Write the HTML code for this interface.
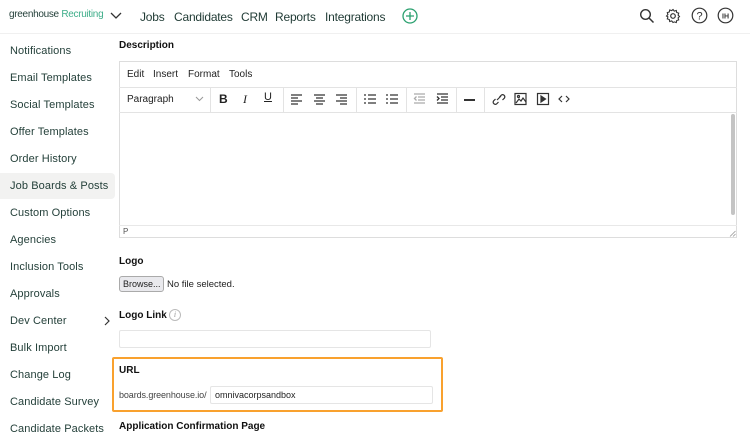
<!DOCTYPE html>
<html><head><meta charset="utf-8"><style>
*{margin:0;padding:0;box-sizing:border-box}
body{width:750px;height:439px;overflow:hidden;background:#fff;font-family:"Liberation Sans",sans-serif;color:#222;position:relative}
.a{position:absolute;white-space:nowrap}
.nav{font-size:12px;color:#1f3a34;top:10px;letter-spacing:-0.2px}
.side{left:10px;font-size:11px;color:#24403a;letter-spacing:0.1px}
.lbl{font-size:10px;font-weight:bold;color:#111}
.tb{font-size:10px;color:#222}
.sep{position:absolute;top:87px;width:1px;height:25px;background:#e3e3e3}
svg{position:absolute}
</style></head><body>
<!-- top nav -->
<div class="a" style="left:9px;top:9px;font-size:10px;color:#24403a;letter-spacing:-0.3px">greenhouse <span style="color:#3fae8a">Recruiting</span></div>
<svg style="left:110px;top:11px" width="12" height="9" viewBox="0 0 12 9"><path d="M1 2l5 5 5-5" fill="none" stroke="#333" stroke-width="1.3"/></svg>
<div class="a nav" style="left:140px">Jobs</div>
<div class="a nav" style="left:174px">Candidates</div>
<div class="a nav" style="left:241px">CRM</div>
<div class="a nav" style="left:275px">Reports</div>
<div class="a nav" style="left:325px">Integrations</div>
<svg style="left:402px;top:8px" width="16" height="16" viewBox="0 0 16 16"><circle cx="8" cy="8" r="7" fill="none" stroke="#2aa06f" stroke-width="1.3"/><path d="M8 4v8M4 8h8" stroke="#2aa06f" stroke-width="1.3"/></svg>
<svg style="left:639px;top:8px" width="16" height="16" viewBox="0 0 16 16"><circle cx="6.5" cy="6.5" r="4.8" fill="none" stroke="#333" stroke-width="1.4"/><path d="M10 10l4.5 4.5" stroke="#333" stroke-width="1.5"/></svg>
<svg style="left:665px;top:8px" width="16" height="16" viewBox="0 0 16 16"><circle cx="8" cy="8" r="2.3" fill="none" stroke="#333" stroke-width="1.2"/><path d="M8 1.5l1.3 1.6 2-.6.4 2 2 .6-.6 2 1.4 1.4-1.4 1.4.6 2-2 .6-.4 2-2-.6L8 14.5l-1.3-1.6-2 .6-.4-2-2-.6.6-2L1.5 8l1.4-1.4-.6-2 2-.6.4-2 2 .6z" fill="none" stroke="#333" stroke-width="1.1"/></svg>
<svg style="left:691px;top:7px" width="17" height="17" viewBox="0 0 17 17"><circle cx="8.5" cy="8.5" r="7.3" fill="none" stroke="#333" stroke-width="1.2"/><text x="8.5" y="12.5" font-size="11" text-anchor="middle" font-family="Liberation Sans" fill="#333">?</text></svg>
<svg style="left:717px;top:7px" width="17" height="17" viewBox="0 0 17 17"><circle cx="8.5" cy="8.5" r="7.3" fill="none" stroke="#333" stroke-width="1.2"/><text x="8.5" y="11.3" font-size="7" font-weight="bold" text-anchor="middle" font-family="Liberation Sans" fill="#333">IH</text></svg>
<div class="a" style="left:0;top:33px;width:750px;height:1px;background:#f0f0f0"></div>
<!-- sidebar -->
<div class="a" style="left:0;top:173px;width:115px;height:26px;background:#f2f2f1;border-radius:0 4px 4px 0"></div>
<div class="a side" style="top:45px">Notifications</div>
<div class="a side" style="top:72px">Email Templates</div>
<div class="a side" style="top:99px">Social Templates</div>
<div class="a side" style="top:126px">Offer Templates</div>
<div class="a side" style="top:153px">Order History</div>
<div class="a side" style="top:180px">Job Boards &amp; Posts</div>
<div class="a side" style="top:207px">Custom Options</div>
<div class="a side" style="top:234px">Agencies</div>
<div class="a side" style="top:261px">Inclusion Tools</div>
<div class="a side" style="top:288px">Approvals</div>
<div class="a side" style="top:315px">Dev Center</div>
<svg style="left:103px;top:316px" width="8" height="10" viewBox="0 0 8 10"><path d="M2 1l4 4-4 4" fill="none" stroke="#333" stroke-width="1.2"/></svg>
<div class="a side" style="top:342px">Bulk Import</div>
<div class="a side" style="top:369px">Change Log</div>
<div class="a side" style="top:396px">Candidate Survey</div>
<div class="a side" style="top:423px">Candidate Packets</div>
<!-- description -->
<div class="a lbl" style="left:119px;top:40px">Description</div>
<div class="a" style="left:119px;top:61px;width:618px;height:177px;border:1px solid #ddd"></div>
<div class="a" style="left:119px;top:87px;width:618px;height:1px;background:#e3e3e3"></div>
<div class="a" style="left:119px;top:112px;width:618px;height:1px;background:#e3e3e3"></div>
<div class="a" style="left:119px;top:225px;width:618px;height:1px;background:#e8e8e8"></div>
<div class="a tb" style="left:127px;top:69px">Edit</div>
<div class="a tb" style="left:153px;top:69px">Insert</div>
<div class="a tb" style="left:188px;top:69px">Format</div>
<div class="a tb" style="left:229px;top:69px">Tools</div>
<div class="a tb" style="left:127px;top:94px">Paragraph</div>
<svg style="left:195px;top:96px" width="9" height="6" viewBox="0 0 9 6"><path d="M1 1l3.5 3.5L8 1" fill="none" stroke="#999" stroke-width="1"/></svg>
<div class="sep" style="left:210px"></div><div class="sep" style="left:283px"></div><div class="sep" style="left:356px"></div><div class="sep" style="left:406px"></div><div class="sep" style="left:456px"></div><div class="sep" style="left:484px"></div>
<div class="a" style="left:219px;top:92px;font-size:12px;font-weight:bold">B</div>
<div class="a" style="left:243px;top:92px;font-size:12px;font-style:italic;font-family:'Liberation Serif'">I</div>
<div class="a" style="left:264px;top:91px;font-size:11px;text-decoration:underline">U</div>
<svg style="left:290px;top:93px" width="60" height="12" viewBox="0 0 60 12" stroke="#333" stroke-width="1.3"><path d="M1 2h11M1 5h7M1 8h11M1 11h7M24 2h11M26 5h7M24 8h11M26 11h7M46 2h11M50 5h7M46 8h11M50 11h7"/></svg>
<svg style="left:363px;top:93px" width="36" height="12" viewBox="0 0 36 12" stroke="#333" stroke-width="1.3"><path d="M1 2h2M1 6h2M1 10h2M5 2h8M5 6h8M5 10h8M23 2h2M23 6h2M23 10h2M27 2h8M27 6h8M27 10h8"/></svg>
<svg style="left:413px;top:93px" width="36" height="12" viewBox="0 0 36 12" stroke-width="1.3"><path d="M1 1h11M5 4h7M5 7h7M1 10h11M3.5 3.5l-2 2 2 2" fill="none" stroke="#aaa"/><path d="M24 1h11M28 4h7M28 7h7M24 10h11M24 3.5l2 2-2 2" fill="none" stroke="#333"/></svg>
<div class="a" style="left:464px;top:99px;width:11px;height:1.5px;background:#333"></div>
<svg style="left:491px;top:92px" width="84" height="14" viewBox="0 0 84 14" fill="none" stroke="#333" stroke-width="1.2"><path d="M6 8l4-4M4.5 7l-2 2a2.2 2.2 0 003 3l2-2M8.5 5l2-2a2.2 2.2 0 013 3l-2 2"/><rect x="24" y="1.5" width="11" height="11"/><path d="M25 11l3-4 2 2 2-3 3 4"/><circle cx="27.5" cy="4.5" r="1"/><rect x="46.5" y="1.5" width="11" height="11"/><path d="M50 4v6l4.5-3z" fill="#333"/><path d="M71 4l-3 3 3 3M75 4l3 3-3 3"/></svg>
<div class="a" style="left:731px;top:114px;width:4px;height:101px;background:#c4c4c4;border-radius:2px"></div>
<div class="a" style="left:123px;top:227px;font-size:8px;color:#555">P</div>
<svg style="left:729px;top:230px" width="7" height="7" viewBox="0 0 7 7" stroke="#999" stroke-width="0.8"><path d="M1 6.5l5.5-5.5M4 6.5l2.5-2.5"/></svg>
<!-- logo -->
<div class="a lbl" style="left:119px;top:256px">Logo</div>
<div class="a" style="left:119px;top:276px;width:45px;height:16px;border:1px solid #aaa;border-radius:3px;background:#e9e9ed;font-size:9px;line-height:14px;padding-left:3px">Browse...</div>
<div class="a" style="left:167px;top:279px;font-size:9.5px">No file selected.</div>
<div class="a lbl" style="left:119px;top:310px">Logo Link</div>
<div class="a" style="left:169px;top:309px;width:12px;height:12px;border:1px solid #bbb;border-radius:50%;font-size:8px;font-style:italic;color:#999;text-align:center;line-height:10px;font-family:'Liberation Serif'">i</div>
<div class="a" style="left:119px;top:330px;width:312px;height:18px;border:1px solid #e5e5e5;border-radius:2px"></div>
<!-- URL -->
<div class="a" style="left:112px;top:357px;width:331px;height:55px;border:2.5px solid #f9a12e;border-radius:2px"></div>
<div class="a lbl" style="left:119px;top:365px">URL</div>
<div class="a" style="left:119px;top:390px;font-size:9px;color:#444;letter-spacing:-0.1px">boards.greenhouse.io/</div>
<div class="a" style="left:210px;top:386px;width:223px;height:18px;border:1px solid #e5e5e5;border-radius:2px;font-size:9px;padding:3px 0 0 4px;color:#222">omnivacorpsandbox</div>
<div class="a lbl" style="left:119px;top:421px">Application Confirmation Page</div>
</body></html>
